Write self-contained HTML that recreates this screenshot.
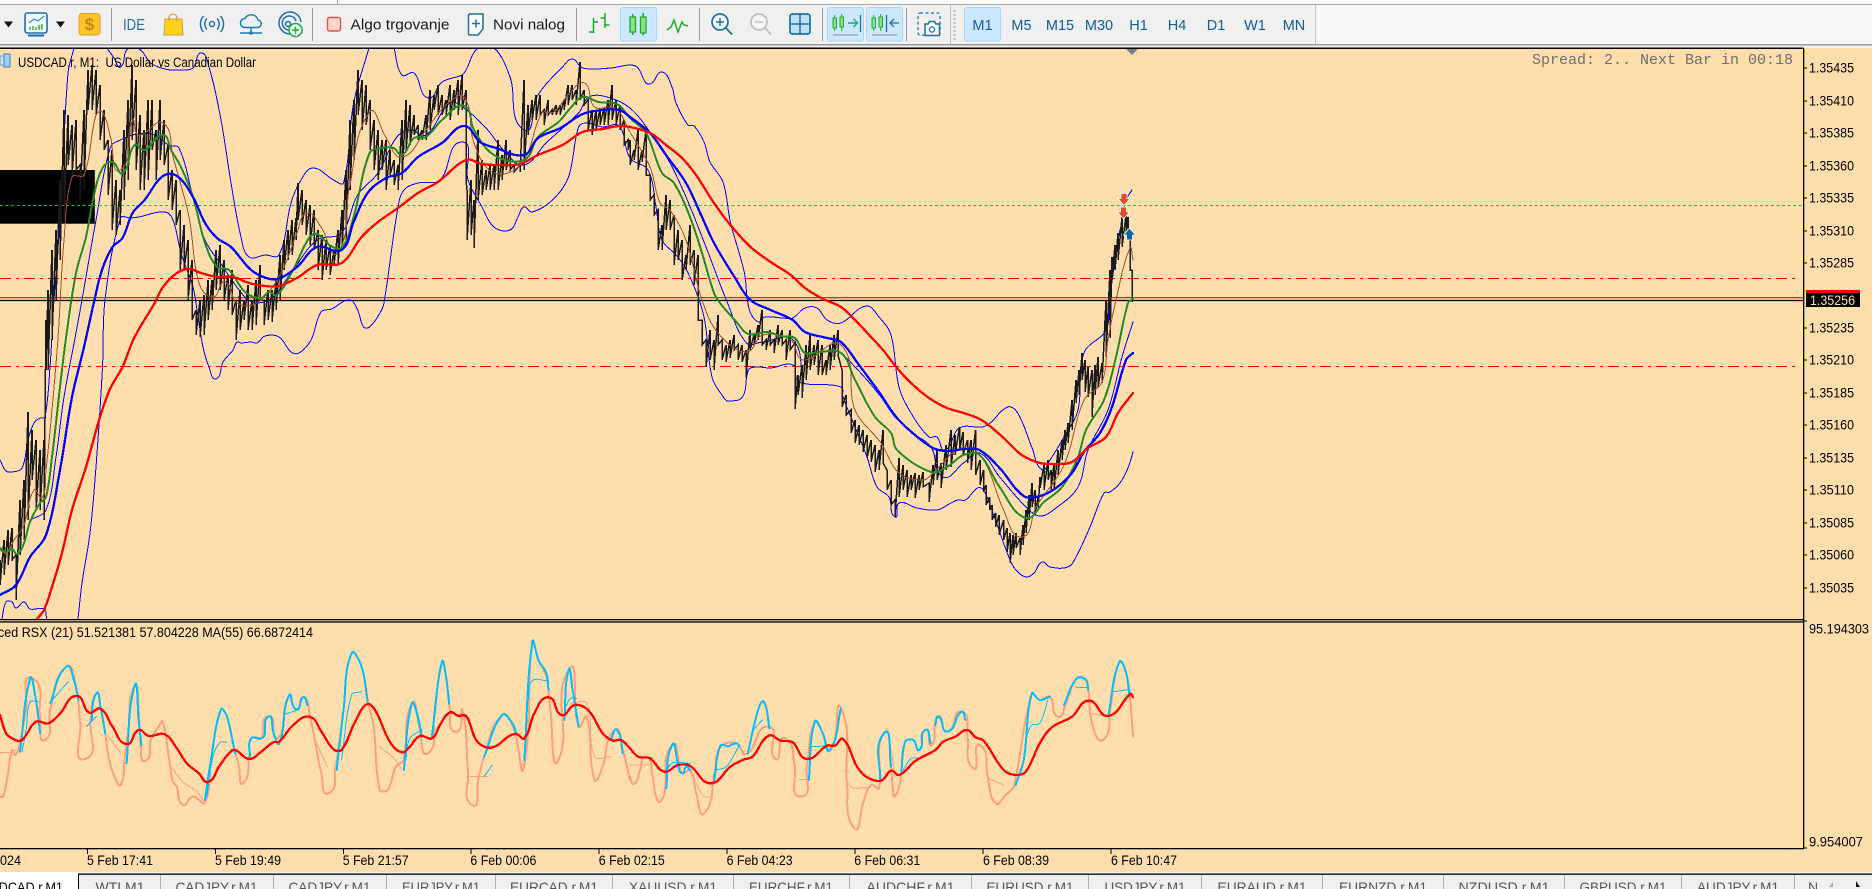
<!DOCTYPE html>
<html><head><meta charset="utf-8"><title>USDCAD.r,M1</title>
<style>
html,body{margin:0;padding:0;background:#f0f0f0;width:1872px;height:889px;overflow:hidden}
svg{display:block}
text{font-family:"Liberation Sans",sans-serif}
.p{font-size:13.5px;fill:#000}
.t{font-size:13.5px;fill:#000}
.tab{font-size:14px;fill:#555;text-anchor:middle}
.tf{font-size:14.5px;fill:#0f5c9c;text-anchor:middle}
.l{fill:none;stroke-linejoin:round;stroke-linecap:round;shape-rendering:crispEdges}
.s{fill:none;stroke-linejoin:round;stroke-linecap:round;vector-effect:non-scaling-stroke;shape-rendering:crispEdges}
.i{fill:none;stroke:#1f6fa8;stroke-width:1.5}
.g{fill:none;stroke:#22a82a;stroke-width:1.5}
</style></head><body>
<svg width="1872" height="889" viewBox="0 0 1872 889" xmlns="http://www.w3.org/2000/svg">
<defs><clipPath id="mp"><rect x="0" y="49" width="1803" height="570"/></clipPath></defs>

<!-- top chrome -->
<rect width="1872" height="889" fill="#f0f0f0"/>
<rect width="1872" height="4" fill="#fafafa"/>
<rect x="337" y="0" width="1" height="4" fill="#a8a8a8"/>
<rect y="4" width="1872" height="1" fill="#a8a8a8"/>
<rect y="44" width="1872" height="1.5" fill="#9c9c9c"/>
<rect x="1315" y="5" width="1" height="39" fill="#c4c4c4"/>
<rect x="1316" y="5" width="556" height="39" fill="#f6f6f6"/>

<!-- toolbar -->
<g fill="#9a9a9a">
<rect x="111" y="8" width="1" height="33"/><rect x="312" y="8" width="1" height="33"/><rect x="576" y="8" width="1" height="33"/><rect x="699" y="8" width="1" height="33"/><rect x="822" y="8" width="1" height="33"/><rect x="906" y="8" width="1" height="33"/><rect x="950" y="5" width="1" height="39" fill="#c0c0c0"/>
</g>
<path d="M954.5 10V42" stroke="#bdbdbd" stroke-width="2" stroke-dasharray="2 2"/>
<path d="M4 21.5h9l-4.5 6z" fill="#111"/>
<path d="M56 21.5h9l-4.5 6z" fill="#111"/>
<!-- chart window icon -->
<rect x="25" y="13" width="22" height="20" rx="2.5" fill="#f4fbff" stroke="#1f6fa8" stroke-width="1.6"/>
<path d="M28 35.5h16" stroke="#1f6fa8" stroke-width="2"/>
<path d="M29 23l5-4 4 2 6-5" fill="none" stroke="#2f8fc9" stroke-width="1.2"/>
<path d="M30 30v-3M33 30v-4M36 30v-3M39 30v-5M42 30v-6" stroke="#3fb54a" stroke-width="1.6"/>
<!-- dollar -->
<rect x="79" y="13.500" width="21" height="21.500" rx="3" fill="#fbc531" stroke="#e8a020"/>
<text x="89.500" y="30" font-size="17" font-weight="bold" fill="#c8860d" text-anchor="middle">$</text>
<!-- IDE -->
<text x="123" y="30" font-size="16" fill="#2f6ea6" textLength="22" lengthAdjust="spacingAndGlyphs">IDE</text>
<!-- bag -->
<path d="M165 19h17l1 16h-19z" fill="#ffd21c" stroke="#c9a34a"/>
<path d="M169 21v-3a4 4 0 0 1 8 0v3" fill="none" stroke="#c9a34a" stroke-width="1.3"/>
<!-- signal -->
<circle cx="212" cy="24" r="2.500" class="i"/>
<path d="M207 18.500a8 8 0 0 0 0 11M217 18.500a8 8 0 0 1 0 11M203.500 16a12 12 0 0 0 0 16M220.500 16a12 12 0 0 1 0 16" class="i"/>
<!-- cloud -->
<path d="M245 27.500a4.500 4.500 0 0 1 0-9 7 7 0 0 1 13 1.500 3.800 3.800 0 0 1 0 7.500z" fill="#e6f3fb" stroke="#1f78b4" stroke-width="1.5"/>
<path d="M251 27.500v4.500M240 33h22" stroke="#1f78b4" stroke-width="1.4"/>
<circle cx="251" cy="33" r="1.800" fill="#1f78b4"/>
<!-- rings -->
<path d="M290 34a11 11 0 1 1 11-12" class="i"/>
<path d="M289 30a7 7 0 1 1 7-9" class="i"/>
<circle cx="288" cy="24" r="2.500" class="i"/>
<circle cx="295.500" cy="30" r="6.500" fill="#e9fbe9" stroke="#22a84a" stroke-width="1.500"/>
<path d="M295.500 26.500v7M292 30h7" stroke="#22a84a" stroke-width="1.500"/>
<!-- Algo -->
<rect x="327.500" y="17.500" width="13" height="13.500" rx="2" fill="#fdd7cc" stroke="#e2534f" stroke-width="1.400"/>
<text x="350.500" y="29.500" font-size="15" fill="#1a1a1a" textLength="99" lengthAdjust="spacingAndGlyphs">Algo trgovanje</text>
<!-- new order -->
<path d="M470 14h13v15l-5 6h-8a1.500 1.500 0 0 1-1.500-1.500v-18a1.500 1.500 0 0 1 1.500-1.500z" fill="#fff" stroke="#1f6fa8" stroke-width="1.500"/>
<path d="M476 19.500v8M472 23.500h8" stroke="#1f6fa8" stroke-width="1.500"/>
<text x="493" y="29.500" font-size="15" fill="#1a1a1a" textLength="72" lengthAdjust="spacingAndGlyphs">Novi nalog</text>
<!-- bars -->
<path d="M593.500 18v15M589 32h4.500M593.500 22H598M605 13v15M600.500 18h4.500M605 25h4.500" class="g" stroke-width="2"/>
<!-- candle highlighted -->
<rect x="620.500" y="7.500" width="36" height="33.500" rx="2.500" fill="#cce8ff" stroke="#a5d6fb"/>
<rect x="630" y="17" width="5.500" height="15" fill="#8fe08f" stroke="#1faa2a" stroke-width="1.300"/><path d="M632.700 14v3M632.700 32v3" class="g"/>
<rect x="640.500" y="17" width="5.500" height="16" fill="#8fe08f" stroke="#1faa2a" stroke-width="1.300"/><path d="M643.200 13v4M643.200 33v2.500" class="g"/>
<!-- line -->
<path d="M667 30l4-3 3-7 4 12 4-10 2 3 4 1" fill="none" stroke="#22a82a" stroke-width="1.500"/>
<!-- zoom in/out -->
<circle cx="720" cy="22" r="8" fill="#f4fbff" stroke="#1f6fa8" stroke-width="1.700"/>
<path d="M726 28l6 6.500" stroke="#1f6fa8" stroke-width="1.700"/><path d="M720 18v8M716 22h8" stroke="#1f6fa8" stroke-width="1.400"/>
<circle cx="759" cy="22" r="8" fill="#f5f5f5" stroke="#bdbdbd" stroke-width="1.700"/>
<path d="M765 28l6 6.500" stroke="#bdbdbd" stroke-width="1.700"/><path d="M755 22h8" stroke="#bdbdbd" stroke-width="1.400"/>
<!-- tile -->
<rect x="790" y="14" width="20" height="20" rx="2.500" fill="#bfe0f7" stroke="#1f6fa8" stroke-width="1.700"/><path d="M800 14v20M790 24h20" stroke="#1f6fa8" stroke-width="1.500"/>
<!-- autoscroll -->
<rect x="827.500" y="7.500" width="36" height="33.500" rx="2.500" fill="#cce8ff" stroke="#a5d6fb"/>
<rect x="866.500" y="7.500" width="36" height="33.500" rx="2.500" fill="#cce8ff" stroke="#a5d6fb"/>
<g transform="translate(833 0)"><rect x="0" y="18" width="3.500" height="10" fill="#8fe08f" stroke="#1faa2a"/><path d="M1.700 15v3M1.700 28v3" stroke="#1faa2a"/><rect x="7" y="17" width="3.500" height="10" fill="#8fe08f" stroke="#1faa2a"/><path d="M8.700 14v3M8.700 27v4" stroke="#1faa2a"/></g>
<path d="M848 23h9M853.500 19l4 4-4 4" fill="none" stroke="#22a87a" stroke-width="1.500"/><path d="M860.500 15v17" stroke="#1f6fa8" stroke-width="1.300"/>
<path d="M833 35h25M872 35h25" stroke="#9a9a9a" stroke-width="1.200"/>
<g transform="translate(872 0)"><rect x="0" y="18" width="3.500" height="10" fill="#8fe08f" stroke="#1faa2a"/><path d="M1.700 15v3M1.700 28v3" stroke="#1faa2a"/><rect x="7" y="17" width="3.500" height="10" fill="#8fe08f" stroke="#1faa2a"/><path d="M8.700 14v3M8.700 27v4" stroke="#1faa2a"/></g>
<path d="M886.500 15v17" stroke="#1f6fa8" stroke-width="1.300"/><path d="M899 23h-9M894 19l-4 4 4 4" fill="none" stroke="#1f6fa8" stroke-width="1.300"/>
<!-- camera -->
<rect x="918" y="13" width="22" height="22" rx="2" fill="none" stroke="#1f6fa8" stroke-width="1.300" stroke-dasharray="3 2.500"/>
<path d="M925 24h3l1.500-2.500h5l1.500 2.500h3.500v11.500h-14.500z" fill="#f4fbff" stroke="#1f6fa8" stroke-width="1.500"/><circle cx="932" cy="29.500" r="2.600" fill="none" stroke="#1f6fa8" stroke-width="1.300"/>
<!-- timeframes -->
<rect x="964.500" y="7.500" width="36" height="33.500" rx="2.500" fill="#cce8ff" stroke="#a5d6fb"/>
<text class="tf" x="982.500" y="30">M1</text><text class="tf" x="1021.500" y="30">M5</text><text class="tf" x="1060" y="30">M15</text><text class="tf" x="1099" y="30">M30</text><text class="tf" x="1138.500" y="30">H1</text><text class="tf" x="1177" y="30">H4</text><text class="tf" x="1216" y="30">D1</text><text class="tf" x="1255" y="30">W1</text><text class="tf" x="1294" y="30">MN</text>

<!-- chart bg -->
<rect x="0" y="48" width="1872" height="824" fill="#ffdead"/>
<rect x="0" y="47.500" width="1803.500" height="1.500" fill="#000"/>
<rect x="0" y="619" width="1803" height="1.300" fill="#000"/>
<rect x="0" y="621.300" width="1803" height="1.300" fill="#000"/>
<rect x="0" y="848" width="1804" height="1.300" fill="#000"/>
<rect x="1803" y="48" width="1.300" height="801" fill="#000"/>

<!-- black rect & level lines -->
<rect x="0" y="170" width="94.800" height="53.700" fill="#000"/>
<g clip-path="url(#mp)">
<path d="M0 205.500H1803" stroke="#32b432" stroke-dasharray="3 2.500" shape-rendering="crispEdges"/>
<path d="M0 278.500H1800" stroke="#ff0000" stroke-width="1.300" stroke-dasharray="11 5 3 5" shape-rendering="crispEdges"/>
<path d="M0 366.500H1800" stroke="#ff0000" stroke-width="1.300" stroke-dasharray="11 5 3 5" shape-rendering="crispEdges"/>
<path d="M0 297.700H1803" stroke="#ff0000" stroke-width="1.200"/>
<path d="M0 300.500H1803" stroke="#000" stroke-width="1.200"/>

<!-- thin bands -->
<polyline class="l" stroke="#0000ff" stroke-width="1" points="0,460 6,471 12,472 22,468 28,440 34,423 40,418 45,417 50,367 54,300 60,220 68,73 74,48"/>
<polyline class="l" stroke="#0000ff" stroke-width="1" points="107,48 114,58 120.500,67 126.600,50 136.600,48 142.600,52 150.700,63 164.700,69 177,70 193,68 201,53 209,67 221,120 231,183 241,237 249,257 265,255 279,255 291,203 301,180 313,168 333.500,180 343.500,183 353.600,103 369,48"/>
<polyline class="l" stroke="#0000ff" stroke-width="1" points="394,48 402,75 414,73 428,98 442,82 462,75 466,70 478,48 494,48 510,77 524,130 538,95 562.500,67 572.500,59 582.600,68 610.700,68 630,65 638,68 646,83 652,83 662,72 672,87 676,103 688,125 694,126 704,142 710,162 723,182 730.400,222 744.500,273 747,297 750.500,313 758.600,322 764.600,317 782.700,318 792.700,318 805,308 817,308 827,320 841,323 866,306 879,317 891,335 899,387 911,413 929,437 937,437 945,450 959.500,428 985.500,426 1007.700,407 1017.700,413 1031.800,447 1042,470 1050,460 1064,437 1078,410 1084,353 1106,330 1110,297 1118,240 1123,217 1126,200 1132,190"/>
<polyline class="l" stroke="#0000ff" stroke-width="1" points="2,619 6,602 12,602 16,608 24,602 30,609 44,609 46.600,619"/>
<polyline class="l" stroke="#0000ff" stroke-width="1" points="78,619 82,583 90,533 96,467 102.500,367 105,300 120.500,218 130.600,218 138.600,217 164.700,212 173,220 181,253 193,287 197,310 203,347 209,367 216,379 223,362 233,350 237,342 241,343 251,342 257,343 265,336 279,337 291,352 299,353 311,340 321,312 331.500,309 349.500,300 357.600,310 363.600,327 369.600,327 380,313 384,303 398,207 404,190 418,183 440,180 462,142 468,180 482,207 494,227 510,230 518,217 524,207 532,212 552.500,200 568.500,177 578.600,127 586.600,123 602.600,127 619,126 630,158 648,170 656,207 662,240 678,257 690,277 704,317 712,377 724,398 728,401 742.500,397 748.500,370 756.600,367 770.600,368 793,365 797,380 807,384 841,387 843,397 855,427 867,457 877,487 889,497 895,517 899,503 917,508 937,510 951,503 957.500,500 965.500,500 977.500,488 983.500,490 993.600,515 1010,560 1016,570 1026,577 1034,573 1042,562 1050,567 1068,567 1076,557 1090,527 1104,493 1110,492 1120,483 1128,468 1133,452"/>
<polyline class="l" stroke="#0000ff" stroke-width="1" points="30,520 46,510 56,457 64,397 76,333 82,300 96,220 110.500,147 120.500,140 136.600,134 154.700,135 168.700,145 179,148 193,197 205,240 223,267 245,297 257,303 273,297 293,270 317,240 341.500,233 357.600,195 378,173 396,138 410,130 426,135 450,103 464,108 486,128 506,153 524,165 546,143 578.600,113 589,97 607,97 630,108 652,135 670,163 686,197 706,247 726.400,300 746.500,343 762.600,342 793,340 803,383"/>
<polyline class="l" stroke="#0000ff" stroke-width="1" points="842,353 867,380 881,397 895,417 911,432 931,447 943,477 963.500,463 979.500,453 999.600,477 1026,507 1040,516 1056,508 1078,487 1088,450 1108,410 1122,357 1133,322"/>

<!-- price -->
<polyline fill="none" stroke="#1a1a1a" stroke-width="1.500" shape-rendering="crispEdges" points="0,560 0,585 4,540 4,575 8,530 8,565 12,528 12,560 16,555 16,600 20,500 20,555 24,480 24,540 28,412 28,520 32,430 32,480 36,440 36,510 40,450 40,510 44,440 44,520 46,320 46,370 48,290 48,370 52,250 52,340 56,230 56,300 60,180 60,260 64,110 64,220 68,115 68,165 72,125 72,175 76,120 76,170 80,165 80,200 84,110 84,190 88,70 88,110 92,65 92,110 96,70 96,115 100,85 100,140 104,110 104,150 108,140 108,195 112,150 112,230 116,180 116,235 120,190 120,225 124,130 124,200 128,100 128,180 132,65 132,140 136,80 136,170 140,115 140,190 144,130 144,190 148,100 148,180 152,100 152,150 156,130 156,180 160,100 160,160 164,120 164,165 168,145 168,200 172,170 172,210 176,180 176,225 180,210 180,270 184,225 184,270 188,240 188,300 192,260 192,320 196,310 196,335 200,300 200,337 204,295 204,335 208,280 208,320 212,280 212,310 216,250 216,290 220,245 220,290 224,260 224,300 228,275 228,310 232,270 232,315 236,300 236,340 240,290 240,330 244,300 244,320 248,285 248,330 252,300 252,330 256,280 256,325 260,265 260,300 264,300 264,325 268,290 268,320 272,290 272,322 276,280 276,310 280,255 280,300 284,240 284,270 288,230 288,260 292,220 292,255 296,218 296,240 298,183 298,220 302,190 302,225 306,200 306,235 310,205 310,245 314,210 314,250 318,230 318,270 322,235 322,280 326,240 326,270 330,245 330,275 334,250 334,265 338,230 338,265 342,210 342,250 346,170 346,240 350,120 350,190 354,100 354,160 358,70 358,115 362,80 362,130 366,85 366,125 370,100 370,150 374,120 374,170 378,130 378,180 382,140 382,170 386,140 386,190 390,150 390,175 394,160 394,185 398,165 398,190 402,120 402,180 406,100 406,150 410,105 410,145 414,115 414,135 418,125 418,140 422,130 422,140 426,115 426,140 430,90 430,130 434,95 434,110 438,85 438,115 442,95 442,115 446,100 446,115 450,85 450,120 454,90 454,110 458,80 458,115 462,75 462,110 466,90 466,180 467,190 467,240 471,180 471,235 474,200 474,248 478,130 478,200 482,160 482,195 486,170 486,190 490,165 490,190 494,165 494,190 498,140 498,190 502,155 502,180 506,140 506,170 510,150 510,170 514,165 514,172 520,165 520,172 524,80 524,170 528,105 528,135 532,100 532,120 536,95 536,120 540,95 540,115 544,110 544,125 548,100 548,115 552,110 552,115 556,105 556,115 560,105 560,115 564,100 564,110 568,85 568,105 572,85 572,100 576,90 576,105 580,62 580,100 584,90 584,105 588,100 588,130 592,110 592,135 596,110 596,130 600,108 600,125 604,108 604,125 608,100 608,125 612,85 612,120 616,100 616,125 620,105 620,130 624,120 624,145 628,140 628,150 630,140 630,165 634,150 634,160 638,130 638,170 642,150 642,162 646,130 646,175 650,175 650,200 654,195 654,215 658,210 658,250 662,225 662,250 666,195 666,230 670,200 670,230 674,215 674,265 678,230 678,260 682,240 682,280 686,255 686,270 690,225 690,265 694,250 694,285 698,255 698,320 702,320 702,345 706,340 706,367 710,330 710,360 714,340 714,370 718,315 718,345 722,340 722,360 726,345 726,362 730,340 730,358 734,335 734,350 738,345 738,360 742,345 742,362 746,350 746,378 750,330 750,350 754,335 754,345 758,325 758,340 762,310 762,345 766,340 766,350 770,330 770,345 774,340 774,353 778,325 778,345 782,330 782,345 786,340 786,360 790,330 790,350 795,343 795,409 798,375 798,395 802,365 802,398 806,345 806,380 810,335 810,370 814,345 814,365 818,340 818,375 822,345 822,375 826,360 826,375 830,345 830,370 834,335 834,360 838,330 838,355 842,370 842,407 846,395 846,415 851,410 851,433 855,420 855,443 859,425 859,445 863,430 863,452 867,435 867,458 871,440 871,462 875,445 875,472 879,450 879,470 883,430 883,463 887,470 887,490 891,480 891,505 895,500 895,517 899,458 899,497 903,465 903,490 907,470 907,497 911,475 911,490 915,473 915,498 919,475 919,490 923,472 923,487 929,483 929,502 933,465 933,485 937,450 937,480 941,463 941,488 946,445 946,470 951,430 951,467 955,435 955,455 959.500,427 959.500,450 963,432 963,455 967.500,440 967.500,463 971,440 971,470 975.500,430 975.500,475 980,460 980,485 983.500,470 983.500,492 986,485 986,505 989.600,497 989.600,510 992,505 992,520 995.600,513 995.600,527 999,515 999,535 1003.600,520 1003.600,540 1007,528 1007,552 1010,533 1010,563 1013,535 1013,555 1016,533 1016,548 1020,538 1020,555 1023,525 1023,545 1026,510 1026,533 1029,495 1029,520 1032,483 1032,507 1035,490 1035,515 1038,497 1038,510 1040,477 1040,488 1044,465 1044,490 1048,460 1048,480 1051,470 1051,490 1054,463 1054,490 1058,450 1058,475 1062,440 1062,460 1065,430 1065,450 1068,423 1068,443 1072,400 1072,430 1076,380 1076,403 1079,370 1079,395 1082,353 1082,380 1085,360 1085,392 1088,367 1088,397 1092,370 1092,417 1095,365 1095,395 1098,357 1098,387 1102,363 1102,383 1106,300 1106,357 1110,270 1110,338 1112,257 1112,280 1115,245 1115,270 1118,233 1118,260 1122,217 1122,247 1126,215 1126,232 1128,217 1128,230 1130,240 1130,270 1132,270 1132,302"/>

<!-- brown -->
<polyline class="l" stroke="#a0522d" stroke-width="1" points="0,550 6,553 14,540 24,525 34,490 42,498 46,470 52,410 58,338 64,240 72,177 84,175 96,115 102.500,112 110.500,137 120.500,170 132.600,120 138.600,135 163,123 173,157 189,217 199,283 213,297 225,282 237,303 257,303 281,273 297,233 307,213 321,227 337.500,253 349.500,187 369.600,112 385.700,137 402,157 426,130 446,105 464,97 474,143 494,173 522,163 542,113 554,112 570.500,92 584.600,83 594.600,107 615,108 630,132 650,167 660,203 670,210 686,240 702,300 718,333 746.500,352 762.600,335 790.700,340 803,360 841,345 855,410 881,443 899,473 923,480 933,473 963.500,447 983.500,460 1003.600,510 1021.700,537 1036,507 1064,465 1084,400 1102,382 1108,340 1116,300 1130,248 1133,260"/>
<!-- green -->
<polyline class="l" stroke="#228b22" stroke-width="2" points="0,548 6,552 12,549 17,554 24,543 30,522 40,503 46,497 52,457 60,387 66,338 76,273 86,237 94,195 102.500,168 112.500,162 122.500,173 134.600,145 144.600,150 163,135 171,150 181,167 193,197 205,243 217,267 229,270 245,292 261,298 269,292 277,295 293,270 309,238 317,234 329.500,245 341.500,248 353.600,217 369.600,153 381.700,148 393.700,148 402,155 414,138 426,137 442,120 464,106 474,130 494,155 524,160 538,137 558.500,122 570.500,108 582.600,97 598.600,102 617,104 630,118 646,133 662,173 674,183 690,217 702,253 714,293 720,303 736.500,322 748.500,334 766.600,332 780.700,336 794.700,338 805,353 819,352 841,353 855,380 875,417 891,433 897,450 931,472 947,467 963.500,455 979.500,455 999.600,487 1025.700,518 1044,502 1062,487 1078,457 1086,430 1104,400 1116,357 1128,303 1133,299"/>
<!-- blue MA -->
<polyline class="l" stroke="#0000ff" stroke-width="2.300" points="0,595 16,585 30,557 46,535 60,470 72,397 84,347 94,302 102,270 112.500,247 122.500,238 132.600,213 144.600,200 163,176 177,176 193,197 205,223 217,238 231,247 249,268 261,276 277,279 297,267 317,247 341.500,250 353.600,222 367.600,193 386,178 402,173 418,157 442,143 464,126 480,142 496,148 524,155 538,138 560.500,128 580.600,115 594.600,111 619,110 630,117 650,133 666,155 686,183 702,217 714,243 734.500,277 750.500,300 770.600,310 792.700,320 805,332 827,338 841,342 859,365 879,392 897,418 915,435 933,448 947,451 965.500,449 979.500,450 999.600,468 1023.700,496 1040,496 1056,488 1072,473 1084,452 1100,433 1112,407 1126,360 1133,353"/>
<!-- red MA -->
<polyline class="l" stroke="#ff0000" stroke-width="2.300" points="37,619 44,610 52,587 62,553 72,510 86,467 100,417 110.500,388 122.500,367 134.600,337 154.700,303 163,287 177,273 189,269 201,273 217,277 233,277 249,283 265,286 279,286 297,278 317,265 341.500,263 361.600,237 378,222 398,208 418,193 438,182 466,160 482,164 498,165 520,164 538,155 562.500,145 582.600,132 602.600,129 619,126 630,127 650,133 666,145 682,158 696,175 714,203 730.400,225 750.500,247 770.600,262 790.700,275 805,288 823,299 841,307 855,320 871,337 883,350 897,368 911,383 929,398 947,408 963.500,413 981.500,420 1003.600,438 1021.700,455 1040,463 1056,464 1072,462 1088,448 1106,437 1118,413 1133,393"/>

<!-- arrows -->
<path d="M1121 193.500h6v5h3l-6 7-6-7h3z" fill="#e24a28" stroke="#fff" stroke-width=".8"/>
<path d="M1120.500 207h6v5h3l-6 7-6-7h3z" fill="#e24a28" stroke="#fff" stroke-width=".8"/>
<path d="M1126.500 240h6v-5h3l-6-7-6 7h3z" fill="#0f64a8" stroke="#fff" stroke-width=".8"/>
</g>
<path d="M1126 49h12l-6 6z" fill="#708090"/>

<!-- chart labels -->
<rect x="0" y="56" width="4" height="9" fill="#cfe6f7" stroke="#5a9fd0"/><rect x="4" y="54" width="6" height="13" fill="#9fd0f0" stroke="#3a86c0"/>
<text x="18" y="67" font-size="13.500" fill="#000" textLength="238" lengthAdjust="spacingAndGlyphs" xml:space="preserve">USDCAD.r, M1:  US Dollar vs Canadian Dollar</text>
<text x="1532" y="64" font-family="Liberation Mono" style="font-family:'Liberation Mono',monospace" font-size="15" fill="#6e6e6e" textLength="261" lengthAdjust="spacingAndGlyphs">Spread: 2.. Next Bar in 00:18</text>
<text x="-2" y="637" font-size="13.500" fill="#000" textLength="315" lengthAdjust="spacingAndGlyphs">ced RSX (21) 51.521381 57.804228 MA(55) 66.6872414</text>

<!-- price axis -->
<path d="M1803 68h4M1803 101h4M1803 133h4M1803 166h4M1803 198h4M1803 231h4M1803 263h4M1803 328h4M1803 360h4M1803 393h4M1803 425h4M1803 458h4M1803 490h4M1803 523h4M1803 555h4M1803 588h4M1803 621h4M1803 848h4" stroke="#000" stroke-width="1.200" shape-rendering="crispEdges"/>
<g class="pl">
<text class="p" x="1809" y="72.500" textLength="45" lengthAdjust="spacingAndGlyphs">1.35435</text>
<text class="p" x="1809" y="105.500" textLength="45" lengthAdjust="spacingAndGlyphs">1.35410</text>
<text class="p" x="1809" y="137.500" textLength="45" lengthAdjust="spacingAndGlyphs">1.35385</text>
<text class="p" x="1809" y="170.500" textLength="45" lengthAdjust="spacingAndGlyphs">1.35360</text>
<text class="p" x="1809" y="202.500" textLength="45" lengthAdjust="spacingAndGlyphs">1.35335</text>
<text class="p" x="1809" y="235.500" textLength="45" lengthAdjust="spacingAndGlyphs">1.35310</text>
<text class="p" x="1809" y="267.500" textLength="45" lengthAdjust="spacingAndGlyphs">1.35285</text>
<text class="p" x="1809" y="332.500" textLength="45" lengthAdjust="spacingAndGlyphs">1.35235</text>
<text class="p" x="1809" y="364.500" textLength="45" lengthAdjust="spacingAndGlyphs">1.35210</text>
<text class="p" x="1809" y="397.500" textLength="45" lengthAdjust="spacingAndGlyphs">1.35185</text>
<text class="p" x="1809" y="429.500" textLength="45" lengthAdjust="spacingAndGlyphs">1.35160</text>
<text class="p" x="1809" y="462.500" textLength="45" lengthAdjust="spacingAndGlyphs">1.35135</text>
<text class="p" x="1809" y="494.500" textLength="45" lengthAdjust="spacingAndGlyphs">1.35110</text>
<text class="p" x="1809" y="527.500" textLength="45" lengthAdjust="spacingAndGlyphs">1.35085</text>
<text class="p" x="1809" y="559.500" textLength="45" lengthAdjust="spacingAndGlyphs">1.35060</text>
<text class="p" x="1809" y="592.500" textLength="45" lengthAdjust="spacingAndGlyphs">1.35035</text>
<text class="p" x="1809" y="633.500" textLength="60" lengthAdjust="spacingAndGlyphs">95.194303</text>
<text class="p" x="1809" y="846.500" textLength="54" lengthAdjust="spacingAndGlyphs">9.954007</text>
</g>
<rect x="1806" y="290" width="54" height="3.500" fill="#ff0000"/>
<rect x="1806" y="293" width="54" height="14" fill="#000"/>
<text x="1810" y="305" font-size="13.500" fill="#ffdead" textLength="45" lengthAdjust="spacingAndGlyphs">1.35256</text>

<!-- sub-pane -->
<g transform="translate(0,610) scale(.4018,.3333)">
<polyline class="s" stroke="#ffa07a" stroke-width="2" points="0,560 8,560 20,490 30,420 38,435 50,395 65,300 80,205 100,320 112,390 125,300 165,170 190,235 200,340 212,447 225,330 240,250 250,290 262,370 270,440 285,500 300,525 310,450 320,350 335,228 345,300 350,405 362,452 375,390 395,350 405,335 420,440 430,515 440,530 455,585 480,560 510,578 525,450 550,298 565,320 580,400 595,470 605,520 620,440 625,385 650,385 668,320 685,385 700,370 720,255 738,298 755,262 770,310 785,400 800,490 818,550 835,470 855,300 875,130 900,170 915,270 930,350 945,540 965,540 985,470 1005,450 1025,280 1045,360 1065,430 1080,330 1100,155 1110,200 1120,300 1135,365 1150,300 1165,490 1175,585 1190,510 1205,440 1250,315 1280,360 1303,475 1325,95 1340,150 1360,200 1370,300 1390,450 1415,180 1440,350 1460,320 1480,510 1500,470 1530,360 1550,420 1568,510"/>
<g stroke="#ffa07a" stroke-width="1" class="s">
<polyline class="s" points="0,427 25,427 40,420"/><polyline class="s" points="270,380 300,430"/><polyline class="s" points="420,460 455,515 490,545 510,578"/><polyline class="s" points="780,380 815,470"/><polyline class="s" points="945,410 985,450 1000,480"/><polyline class="s" points="1170,500 1215,500"/><polyline class="s" points="1420,280 1460,280 1480,440 1520,440"/>
</g>
<g stroke="#00bfff" stroke-width="1">
<polyline class="s" points="55,425 65,360 75,275 95,275"/><polyline class="s" points="130,270 170,215"/><polyline class="s" points="515,560 530,440 548,397 565,397"/><polyline class="s" points="850,450 875,255 900,245"/><polyline class="s" points="1010,450 1020,385 1050,360"/><polyline class="s" points="1205,500 1225,465"/><polyline class="s" points="1315,270 1325,212 1360,212"/><polyline class="s" points="1405,300 1420,265 1435,265"/><polyline class="s" points="215,350 240,320"/><polyline class="s" points="705,315 745,298"/>
</g>
<g stroke="#00bfff" stroke-width="2">
<polyline class="s" points="50,425 75,205 88,260 100,370"/><polyline class="s" points="125,280 165,170 185,215 195,270"/><polyline class="s" points="228,330 240,250 250,290 262,370"/><polyline class="s" points="315,460 335,228 345,330 352,405"/><polyline class="s" points="510,570 525,450 550,298 565,320 585,430"/><polyline class="s" points="622,440 625,385 655,383 668,320 680,365 695,400 720,255 738,298 755,262 765,285"/><polyline class="s" points="838,480 855,300 875,130 900,170 915,275"/><polyline class="s" points="1005,480 1025,280 1040,320 1050,380"/><polyline class="s" points="1075,380 1100,155 1110,200 1118,280"/><polyline class="s" points="1205,440 1250,315 1275,340 1285,370"/><polyline class="s" points="1305,450 1325,95 1340,150 1360,190 1365,240"/><polyline class="s" points="1405,330 1415,180 1425,240 1440,350"/><polyline class="s" points="1520,390 1535,360 1550,430"/>
</g>
<polyline class="s" stroke="#ff0000" stroke-width="2.300" points="0,315 15,370 30,385 50,393 65,375 90,335 120,340 150,310 190,258 222,308 250,296 280,350 315,402 345,360 370,378 410,373 440,415 465,460 495,490 518,516 545,470 570,430 585,420 620,447 650,425 680,397 695,395 730,345 770,320 800,365 830,418 850,420 880,345 905,290 920,283 940,315 970,395 1000,427 1020,410 1045,378 1075,385 1095,345 1120,307 1140,317 1160,318 1185,390 1210,412 1235,408 1265,380 1285,372 1305,385 1330,310 1365,262 1398,315 1430,285 1465,302 1500,370 1525,392 1545,390 1568,415"/>
</g>
<g transform="translate(630,610) scale(.4018,.3333)">
<polyline class="s" stroke="#ffa07a" stroke-width="2" points="0,500 10,522 25,480 40,440 55,490 70,575 85,555 105,405 130,490 150,480 165,550 185,610 210,490 225,410 265,400 290,432 345,350 362,447 385,385 410,470 425,560 440,470 460,335 480,370 500,420 525,295 540,520 558,655 580,580 600,525 620,535 632,370 650,480 662,555 685,395 705,390 720,420 735,360 750,405 768,320 790,365 825,305 840,380 855,475 870,405 890,500 910,580 935,555 955,530 1000,250 1020,270 1045,260 1065,320 1085,280 1112,205 1135,210 1150,340 1177,390 1195,300 1218,155 1235,190 1245,270 1252,380"/>
<g stroke="#ffa07a" stroke-width="1">
<polyline class="s" points="0,465 50,465"/><polyline class="s" points="165,520 185,560 205,560"/><polyline class="s" points="420,508 440,508"/><polyline class="s" points="535,480 550,530 595,532"/><polyline class="s" points="890,505 930,525"/><polyline class="s" points="1150,310 1190,320"/><polyline class="s" points="650,420 660,500"/>
</g>
<g stroke="#00bfff" stroke-width="1">
<polyline class="s" points="90,490 105,460 150,460"/><polyline class="s" points="215,480 240,470 270,410"/><polyline class="s" points="310,355 330,330"/><polyline class="s" points="450,410 490,408"/><polyline class="s" points="680,480 700,445 720,445"/><polyline class="s" points="990,370 1000,345 1020,340 1040,270"/><polyline class="s" points="1110,232 1140,232"/><polyline class="s" points="1205,245 1245,238"/>
</g>
<g stroke="#00bfff" stroke-width="2">
<polyline class="s" points="90,535 105,405 120,465 130,490 140,470 150,480"/><polyline class="s" points="210,510 225,407 245,408 265,400 272,410"/><polyline class="s" points="293,430 320,295 333,275 347,355"/><polyline class="s" points="445,510 460,335 480,370 497,420 525,295"/><polyline class="s" points="622,510 632,370 650,470"/><polyline class="s" points="675,490 685,395 705,390 720,420 735,360 748,400"/><polyline class="s" points="760,345 768,320 790,365 825,305 835,330"/><polyline class="s" points="960,525 980,450 1000,250 1020,270 1045,260"/><polyline class="s" points="1080,285 1112,205 1135,210 1140,240"/><polyline class="s" points="1190,320 1218,155 1235,190 1243,260"/>
</g>
<polyline class="s" stroke="#ff0000" stroke-width="2.300" points="0,415 20,440 50,445 85,485 120,465 150,468 200,520 250,470 280,450 305,440 345,377 375,392 405,397 440,447 490,407 510,407 530,387 565,470 590,502 625,512 650,482 670,495 710,453 760,420 780,395 810,380 838,360 860,382 880,392 930,480 960,495 985,485 1020,400 1050,352 1100,320 1142,272 1190,318 1245,252 1252,262"/>
</g>

<!-- time axis -->
<path d="M87.500 849v5M215.500 849v5M343.500 849v5M471 849v5M599 849v5M727 849v5M855 849v5M983 849v5M1111 849v5" stroke="#000" shape-rendering="crispEdges"/>
<text class="t" x="0" y="865" textLength="21" lengthAdjust="spacingAndGlyphs">024</text>
<text class="t" x="87" y="865" textLength="66" lengthAdjust="spacingAndGlyphs">5 Feb 17:41</text>
<text class="t" x="215" y="865" textLength="66" lengthAdjust="spacingAndGlyphs">5 Feb 19:49</text>
<text class="t" x="342.700" y="865" textLength="66" lengthAdjust="spacingAndGlyphs">5 Feb 21:57</text>
<text class="t" x="470.400" y="865" textLength="66" lengthAdjust="spacingAndGlyphs">6 Feb 00:06</text>
<text class="t" x="598.800" y="865" textLength="66" lengthAdjust="spacingAndGlyphs">6 Feb 02:15</text>
<text class="t" x="726.600" y="865" textLength="66" lengthAdjust="spacingAndGlyphs">6 Feb 04:23</text>
<text class="t" x="854.300" y="865" textLength="66" lengthAdjust="spacingAndGlyphs">6 Feb 06:31</text>
<text class="t" x="983" y="865" textLength="66" lengthAdjust="spacingAndGlyphs">6 Feb 08:39</text>
<text class="t" x="1111" y="865" textLength="66" lengthAdjust="spacingAndGlyphs">6 Feb 10:47</text>

<!-- tabs -->
<rect x="0" y="872" width="1872" height="17" fill="#f0f0f0"/>
<rect x="78" y="873.500" width="1794" height="1.300" fill="#000"/>
<rect x="0" y="872" width="78" height="17" fill="#fff"/>
<rect x="78" y="874" width="1" height="15" fill="#000"/>
<text x="63" y="892" font-size="14" fill="#000" text-anchor="end" textLength="82" lengthAdjust="spacingAndGlyphs">USDCAD.r,M1</text>
<path d="M160.500 875v14M273.500 875v14M386.500 875v14M495.500 875v14M612.500 875v14M733.500 875v14M849.500 875v14M971.500 875v14M1088.500 875v14M1201.500 875v14M1322.500 875v14M1443.500 875v14M1564.500 875v14M1681.500 875v14M1794.500 875v14" stroke="#b0b0b0"/>
<text class="tab" x="120" y="892" textLength="49" lengthAdjust="spacingAndGlyphs">WTI,M1</text>
<text class="tab" x="216.500" y="892" textLength="82" lengthAdjust="spacingAndGlyphs">CADJPY.r,M1</text>
<text class="tab" x="329.500" y="892" textLength="82" lengthAdjust="spacingAndGlyphs">CADJPY.r,M1</text>
<text class="tab" x="441" y="892" textLength="78" lengthAdjust="spacingAndGlyphs">EURJPY.r,M1</text>
<text class="tab" x="554" y="892" textLength="88" lengthAdjust="spacingAndGlyphs">EURCAD.r,M1</text>
<text class="tab" x="673" y="892" textLength="88" lengthAdjust="spacingAndGlyphs">XAUUSD.r,M1</text>
<text class="tab" x="791" y="892" textLength="84" lengthAdjust="spacingAndGlyphs">EURCHF.r,M1</text>
<text class="tab" x="910.500" y="892" textLength="88" lengthAdjust="spacingAndGlyphs">AUDCHF.r,M1</text>
<text class="tab" x="1030" y="892" textLength="87" lengthAdjust="spacingAndGlyphs">EURUSD.r,M1</text>
<text class="tab" x="1145" y="892" textLength="81" lengthAdjust="spacingAndGlyphs">USDJPY.r,M1</text>
<text class="tab" x="1262" y="892" textLength="89" lengthAdjust="spacingAndGlyphs">EURAUD.r,M1</text>
<text class="tab" x="1383" y="892" textLength="88" lengthAdjust="spacingAndGlyphs">EURNZD.r,M1</text>
<text class="tab" x="1504" y="892" textLength="91" lengthAdjust="spacingAndGlyphs">NZDUSD.r,M1</text>
<text class="tab" x="1623" y="892" textLength="87" lengthAdjust="spacingAndGlyphs">GBPUSD.r,M1</text>
<text class="tab" x="1738" y="892" textLength="82" lengthAdjust="spacingAndGlyphs">AUDJPY.r,M1</text>
<text x="1808" y="892" font-size="14" fill="#555">N</text>
<rect x="1820" y="875" width="52" height="14" fill="#f0f0f0"/>
<path d="M1833 882l-4 5h4z" fill="#aaa"/><path d="M1856 881l4 6h-4z" fill="#111"/>
</svg>
<script>
(function(){
var ns='http://www.w3.org/2000/svg';
var list=document.querySelectorAll('polyline.l,polyline.s');
for(var k=0;k<list.length;k++){
  var e=list[k];
  var n=e.getAttribute('points').trim().split(/\s+/).map(function(s){return s.split(',').map(Number);});
  if(n.length<3)continue;
  var dir=function(i){
    var a=n[Math.max(i-1,0)],b=n[Math.min(i+1,n.length-1)],x=b[0]-a[0],y=b[1]-a[1],l=Math.sqrt(x*x+y*y)||1;
    return [x/l,y/l];
  };
  var d='M'+n[0][0]+' '+n[0][1];
  for(var i=0;i<n.length-1;i++){
    var p=n[i],q=n[i+1],dx=q[0]-p[0],dy=q[1]-p[1],L=Math.sqrt(dx*dx+dy*dy)*0.35,u=dir(i),v=dir(i+1);
    d+='C'+(p[0]+u[0]*L).toFixed(2)+' '+(p[1]+u[1]*L).toFixed(2)+' '+(q[0]-v[0]*L).toFixed(2)+' '+(q[1]-v[1]*L).toFixed(2)+' '+q[0]+' '+q[1];
  }
  var P=document.createElementNS(ns,'path');
  for(var a=0;a<e.attributes.length;a++){
    var at=e.attributes[a];
    if(at.name!=='points')P.setAttribute(at.name,at.value);
  }
  P.setAttribute('d',d);
  e.parentNode.replaceChild(P,e);
}
})();
</script>
</body></html>
